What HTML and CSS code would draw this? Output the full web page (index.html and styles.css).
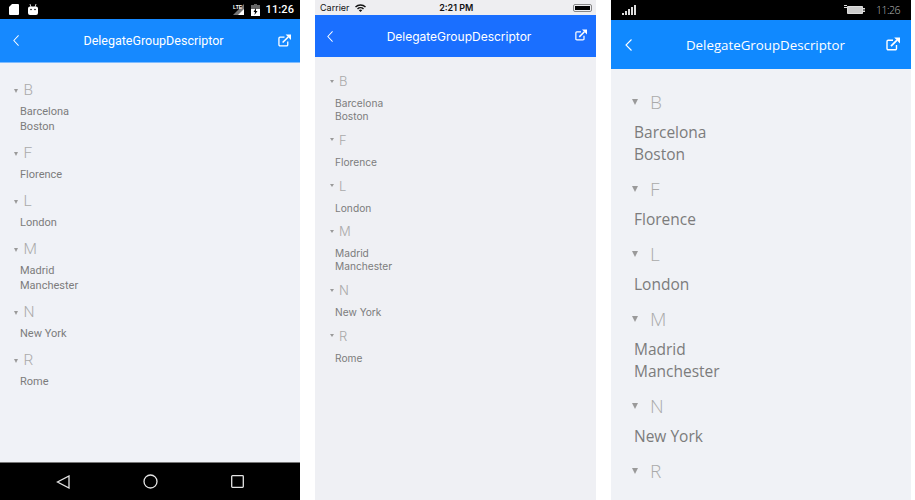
FILE: index.html
```html
<!DOCTYPE html>
<html lang="en">
<head>
    <meta charset="UTF-8">
    <meta name="viewport" content="width=device-width, initial-scale=1.0">
    <title>DelegateGroupDescriptor</title>
    <link rel="stylesheet" href="styles.css">
</head>
<body>
    <svg class="defs" width="0" height="0">
        <symbol id="back" viewBox="0 0 7 12" preserveAspectRatio="none">
            <path d="M6.500 .5 1 6l5.500 5.500" fill="none" stroke="currentColor" stroke-width="1.100"/>
        </symbol>
        <symbol id="share" viewBox="0 0 14 14">
            <path d="M10.5 8v3.6a1.2 1.2 0 0 1-1.2 1.2H2.2A1.2 1.2 0 0 1 1 11.600V4.500a1.200 1.200 0 0 1 1.200-1.200H7" fill="none" stroke="currentColor" stroke-width="1.400"/>
            <path d="M5 9.200 11 3.200" fill="none" stroke="currentColor" stroke-width="1.700"/>
            <path d="M8.200 .6H14V6.400Z" fill="currentColor"/>
        </symbol>
    </svg>

    <div class="phone android">
        <div class="status">
            <svg class="st-icon" width="10" height="11" viewBox="0 0 10 11"><path d="M3 0h6a1 1 0 0 1 1 1v9a1 1 0 0 1-1 1H1a1 1 0 0 1-1-1V3Z" fill="#fff"/></svg>
            <svg class="st-icon" width="10" height="12" viewBox="0 0 10 12"><path d="M2 0 3 3M8 0 7 3" stroke="#ccc" fill="none"/><path d="M2 2.500h6a2 2 0 0 1 2 2V9a2 2 0 0 1-2 2H2a2 2 0 0 1-2-2V4.500a2 2 0 0 1 2-2Z" fill="#fff"/><circle cx="3" cy="5.500" r=".8" fill="#000"/><circle cx="7" cy="5.500" r=".8" fill="#000"/></svg>
            <span class="grow"></span>
            <svg class="st-icon" width="14" height="11" viewBox="0 0 14 11"><path d="M13 0v11H2Z" fill="#777"/><path d="M13 5v6H7Z" fill="#fff"/></svg>
            <span class="lte">LTE</span>
            <svg class="st-icon" width="9" height="12" viewBox="0 0 9 12"><path d="M3 0h3v1h3v11H0V1h3Z" fill="#666"/><path d="M0 5h9v7H0Z" fill="#fff"/><path d="M5 4 2.500 8H4L3.500 11 6.500 7H5Z" fill="#000"/></svg>
            <span class="clock">11:26</span>
        </div>
        <div class="nav">
            <svg class="nav-back" ><use href="#back"/></svg>
            <span class="nav-title">DelegateGroupDescriptor</span>
            <svg class="nav-share"><use href="#share"/></svg>
        </div>
        <div class="list">
            <div class="group"><div class="group-head"><i class="caret"></i><span>B</span></div><div class="item">Barcelona</div><div class="item">Boston</div></div>
            <div class="group"><div class="group-head"><i class="caret"></i><span>F</span></div><div class="item">Florence</div></div>
            <div class="group"><div class="group-head"><i class="caret"></i><span>L</span></div><div class="item">London</div></div>
            <div class="group"><div class="group-head"><i class="caret"></i><span>M</span></div><div class="item">Madrid</div><div class="item">Manchester</div></div>
            <div class="group"><div class="group-head"><i class="caret"></i><span>N</span></div><div class="item">New York</div></div>
            <div class="group"><div class="group-head"><i class="caret"></i><span>R</span></div><div class="item">Rome</div></div>
        </div>
        <div class="softkeys">
            <svg width="14" height="14" viewBox="0 0 14 14"><path d="M13 1v12L1.500 7Z" fill="none" stroke="#e4e4e4" stroke-width="1.300"/></svg>
            <svg width="15" height="15" viewBox="0 0 15 15"><circle cx="7.500" cy="7.500" r="6.500" fill="none" stroke="#e4e4e4" stroke-width="1.300"/></svg>
            <svg width="13" height="13" viewBox="0 0 13 13"><rect x=".7" y=".7" width="11.600" height="11.600" rx=".8" fill="none" stroke="#e4e4e4" stroke-width="1.300"/></svg>
        </div>
    </div>

    <div class="phone ios">
        <div class="status">
            <span class="carrier">Carrier</span>
            <svg class="wifi" width="11" height="8" viewBox="0 0 11 8"><path d="M0 2.500a8 8 0 0 1 11 0L10 3.500a6.500 6.500 0 0 0-9 0Z" fill="#111"/><path d="M2 4.500a5 5 0 0 1 7 0L8 5.500a3.500 3.500 0 0 0-5 0Z" fill="#111"/><path d="M3.800 6.300a2.500 2.500 0 0 1 3.400 0L5.500 8Z" fill="#111"/></svg>
            <span class="clock">2:21 PM</span>
            <span class="battery"><b></b></span>
        </div>
        <div class="nav">
            <svg class="nav-back"><use href="#back"/></svg>
            <span class="nav-title">DelegateGroupDescriptor</span>
            <svg class="nav-share"><use href="#share"/></svg>
        </div>
        <div class="list">
            <div class="group"><div class="group-head"><i class="caret"></i><span>B</span></div><div class="item">Barcelona</div><div class="item">Boston</div></div>
            <div class="group"><div class="group-head"><i class="caret"></i><span>F</span></div><div class="item">Florence</div></div>
            <div class="group"><div class="group-head"><i class="caret"></i><span>L</span></div><div class="item">London</div></div>
            <div class="group"><div class="group-head"><i class="caret"></i><span>M</span></div><div class="item">Madrid</div><div class="item">Manchester</div></div>
            <div class="group"><div class="group-head"><i class="caret"></i><span>N</span></div><div class="item">New York</div></div>
            <div class="group"><div class="group-head"><i class="caret"></i><span>R</span></div><div class="item">Rome</div></div>
        </div>
    </div>

    <div class="phone winphone">
        <div class="status">
            <svg width="14" height="10" viewBox="0 0 14 10"><path d="M0 8h2v2H0ZM3 6h2v4H3ZM6 4h2v6H6ZM9 2h2v8H9ZM12 0h2v10h-2Z" fill="#ddd"/></svg>
            <span class="grow"></span>
            <svg width="21" height="10" viewBox="0 0 21 10"><path d="M3.500 1.500h15v7h-15Z" fill="#ccc" stroke="#ddd"/><path d="M19 3.500h2v3h-2ZM0 .5h3M0 2.500h3" stroke="#ddd" fill="none"/></svg>
            <span class="clock">11:26</span>
        </div>
        <div class="nav">
            <svg class="nav-back"><use href="#back"/></svg>
            <span class="nav-title">DelegateGroupDescriptor</span>
            <svg class="nav-share"><use href="#share"/></svg>
        </div>
        <div class="list">
            <div class="group"><div class="group-head"><i class="caret"></i><span>B</span></div><div class="item">Barcelona</div><div class="item">Boston</div></div>
            <div class="group"><div class="group-head"><i class="caret"></i><span>F</span></div><div class="item">Florence</div></div>
            <div class="group"><div class="group-head"><i class="caret"></i><span>L</span></div><div class="item">London</div></div>
            <div class="group"><div class="group-head"><i class="caret"></i><span>M</span></div><div class="item">Madrid</div><div class="item">Manchester</div></div>
            <div class="group"><div class="group-head"><i class="caret"></i><span>N</span></div><div class="item">New York</div></div>
            <div class="group"><div class="group-head"><i class="caret"></i><span>R</span></div></div>
        </div>
    </div>
</body>
</html>
```

FILE: styles.css
```css
html, body {
    margin: 0;
    height: 100%;
}
body {
    display: flex;
    gap: 15px;
    height: 100vh;
    overflow: hidden;
    background: #fff;
}
.defs {
    position: absolute;
}
.grow {
    flex: 1;
}
.phone {
    display: flex;
    flex-direction: column;
    width: 300px;
    height: 500px;
    overflow: hidden;
}
.status {
    display: flex;
    align-items: center;
    flex-shrink: 0;
}
.nav {
    display: flex;
    align-items: center;
    justify-content: space-between;
    flex-shrink: 0;
    color: #fff;
}
.nav-title {
    flex: 1;
    text-align: center;
}
.list {
    flex: 1;
}
.group-head {
    display: flex;
    align-items: center;
    color: #aaa;
}
.caret {
    width: 0;
    height: 0;
    border-style: solid;
    border-color: #9a9a9a transparent transparent;
}
.item {
    color: #7c7c7c;
}

/* android */
.android .status {
    height: 19px;
    padding: 0 6px 0 9px;
    background: #000;
}
.android .st-icon:nth-child(2) {
    margin-left: 9px;
}
.android .lte {
    position: absolute;
    left: 233px;
    top: 4px;
    font: bold 5px "Liberation Sans", sans-serif;
    color: #fff;
}
.android .st-icon:nth-child(6) {
    margin-left: 6px;
}
.android .clock {
    margin-left: 6px;
    font: 500 11px Roboto, sans-serif;
    letter-spacing: .1px;
    color: #fff;
}
.android .nav {
    height: 43px;
    padding: 0 9px 0 13px;
    background: #1689ff;
    border-bottom: 1px solid #7fbcff;
}
.android .nav-back {
    width: 6px;
    height: 11px;
}
.android .nav-share {
    width: 13px;
    height: 13px;
}
.android .nav-title {
    padding-left: 10px;
    font: 400 12.500px Roboto, sans-serif;
}
.android .list {
    padding: 15px 0 0 14px;
    background: #f0f2f7;
    font-family: Roboto, sans-serif;
}
.android .group {
    padding-bottom: 7px;
}
.android .group-head {
    height: 26px;
    font-size: 15.500px;
    font-weight: 300;
}
.android .group-head span {
    margin-top: -2px;
}
.android .caret {
    border-width: 4px 2.500px 0;
    margin-right: 5.500px;
}
.android .item {
    margin-left: 6px;
    font-size: 11px;
    line-height: 15px;
}
.android .softkeys {
    display: flex;
    align-items: center;
    justify-content: space-between;
    height: 37px;
    padding: 0 56px;
    background: #000;
    border-top: 1px solid #777;
}

/* ios */
.ios {
    width: 281px;
}
.ios .status {
    height: 15px;
    padding: 0 4px 0 5px;
    background: #eeeef1;
    font-family: Inter, sans-serif;
    color: #111;
}
.ios .carrier {
    font-size: 9px;
}
.ios .wifi {
    margin-left: 5px;
}
.ios .clock {
    flex: 1;
    margin-right: 26px;
    font-size: 9px;
    font-weight: 600;
    text-align: center;
}
.ios .battery {
    display: block;
    width: 19px;
    height: 8px;
    padding: 1px;
    border: 1px solid #888;
    border-radius: 2px;
    box-sizing: border-box;
}
.ios .battery b {
    display: block;
    height: 100%;
    background: #000;
}
.ios .nav {
    height: 42px;
    padding: 0 9px 0 12px;
    background: #1a6fff;
}
.ios .nav-back {
    width: 6px;
    height: 11px;
}
.ios .nav-share {
    width: 12px;
    height: 12px;
    margin-top: -2px;
}
.ios .nav-title {
    padding-left: 10px;
    font: 400 12px Inter, sans-serif;
}
.ios .list {
    padding: 14px 0 0 15px;
    background: #eff0f4;
    font-family: Inter, sans-serif;
}
.ios .group {
    padding-bottom: 6.800px;
}
.ios .group-head {
    height: 20px;
    margin-bottom: 6px;
    font-size: 13px;
    font-weight: 300;
}
.ios .caret {
    border-width: 3px 2px 0;
    margin-right: 5px;
}
.ios .item {
    margin-left: 5px;
    font-size: 10.200px;
    line-height: 13px;
}

/* windows phone */
.winphone {
    font-family: "Open Sans", sans-serif;
}
.winphone .status {
    height: 20px;
    padding: 0 11px;
    background: #000;
}
.winphone .clock {
    margin-left: 11px;
    font-size: 10.500px;
    font-weight: 300;
    letter-spacing: -.5px;
    color: #bbb;
}
.winphone .nav {
    height: 49px;
    padding: 0 11px 0 14px;
    background: #1089ff;
}
.winphone .nav-back {
    width: 7px;
    height: 12px;
}
.winphone .nav-share {
    width: 14px;
    height: 14px;
    margin-top: -2px;
}
.winphone .nav-title {
    padding-left: 13px;
    font-size: 13.300px;
}
.winphone .list {
    padding: 18px 0 0 21px;
    background: #f0f2f6;
}
.winphone .group {
    padding-bottom: 9px;
}
.winphone .group-head {
    height: 30px;
    margin-bottom: 4px;
    font-size: 19px;
    font-weight: 300;
}
.winphone .caret {
    border-width: 6px 3.500px 0;
    margin-right: 12px;
}
.winphone .item {
    margin-left: 2px;
    font-size: 15.500px;
    line-height: 22px;
}
```
